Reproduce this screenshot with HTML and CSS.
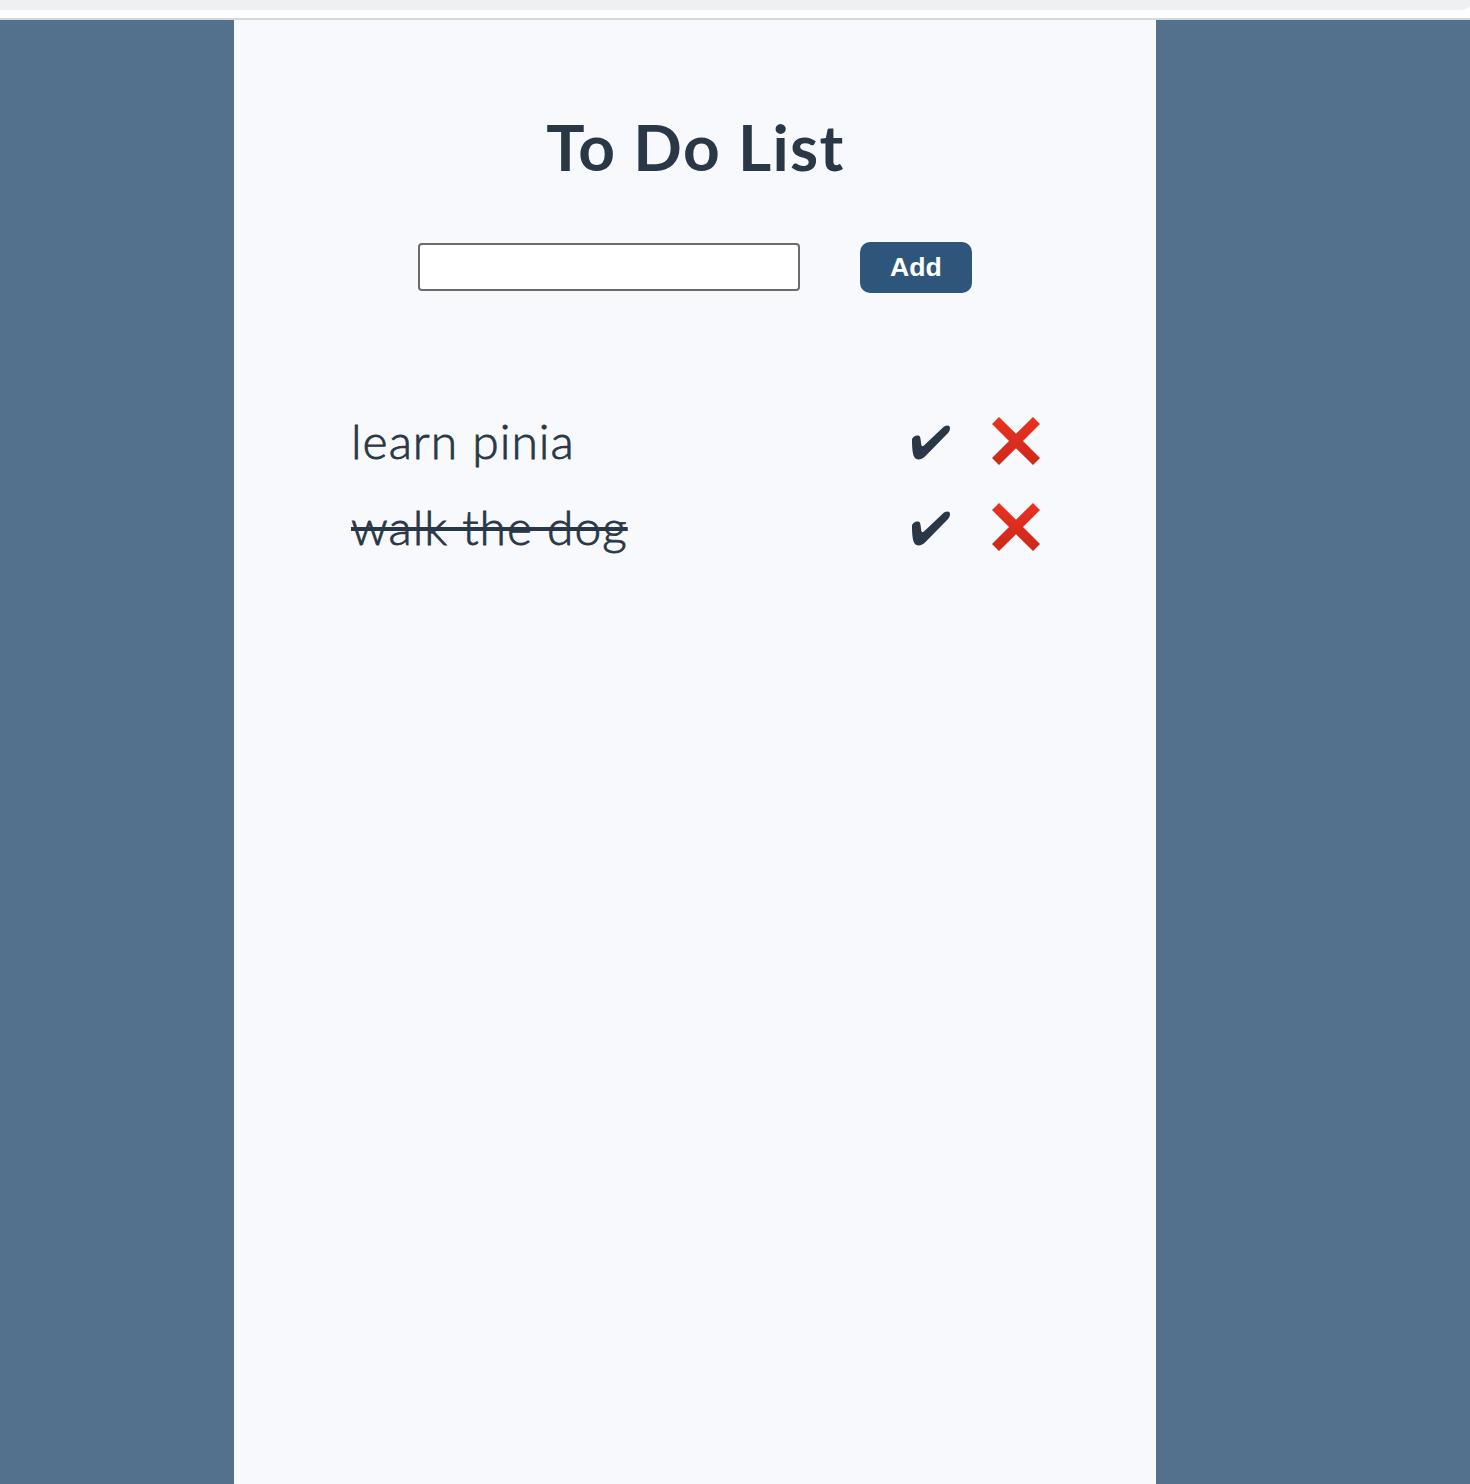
FILE: index.html
```html
<!DOCTYPE html>
<html lang="en">
<head>
  <meta charset="utf-8">
  <title>To Do List</title>
  <link rel="stylesheet" href="styles.css">
</head>
<body>
  <div class="toolbar"><div class="toolbar-field"></div></div>
  <main class="app">
    <h1 class="title">To Do List</h1>
    <form class="add-form">
      <input class="add-input" type="text" aria-label="New item">
      <button class="add-button" type="button">Add</button>
    </form>
    <ul class="todos">
      <li class="todo">
        <span class="todo-text todo-text-open">learn pinia</span>
        <svg class="check" viewBox="0 0 40 36" aria-label="Toggle"><path d="M1 15C1 12 5 10 8 10.700C10 11.500 9.500 17 10.600 20.500C11 21.800 12.500 21 14 19.500L33 1.400C36 -.2 39 0 39 3C39 5 38.300 6.600 36.800 8.200L14.500 31C11 34.500 6.500 36 3.600 32.500C1.200 29 1 20 1 15Z"/></svg>
        <svg class="cross" viewBox="0 0 48 48" aria-label="Delete"><path d="M7 0L24 16.700L41 0L48 7L31 24L48 41L41 48L24 31.300L7 48L0 41L17 24L0 7Z" fill="url(#red)"/></svg>
      </li>
      <li class="todo">
        <span class="todo-text todo-text-done">walk the dog</span>
        <svg class="check" viewBox="0 0 40 36" aria-label="Toggle"><path d="M1 15C1 12 5 10 8 10.700C10 11.500 9.500 17 10.600 20.500C11 21.800 12.500 21 14 19.500L33 1.400C36 -.2 39 0 39 3C39 5 38.300 6.600 36.800 8.200L14.500 31C11 34.500 6.500 36 3.600 32.500C1.200 29 1 20 1 15Z"/></svg>
        <svg class="cross" viewBox="0 0 48 48" aria-label="Delete"><defs><linearGradient id="red" x1="0" y1="0" x2="0" y2="1"><stop offset="0" stop-color="#ea3120"/><stop offset="1" stop-color="#cd281b"/></linearGradient></defs><path d="M7 0L24 16.700L41 0L48 7L31 24L48 41L41 48L24 31.300L7 48L0 41L17 24L0 7Z" fill="url(#red)"/></svg>
      </li>
    </ul>
  </main>
</body>
</html>
```
FILE: styles.css
```css
* {
  box-sizing: border-box;
}

body {
  margin: 0;
  min-height: 1484px;
  background: #53718d;
  color: #293746;
  font-family: Avenir, Lato, sans-serif;
}

.toolbar {
  height: 20px;
  background: #fff;
  border-bottom: 2px solid #d5d8da;
}

.toolbar-field {
  height: 10px;
  background: #eff0f2;
  border-bottom-right-radius: 12px 4px;
}

.app {
  width: 922px;
  height: 1464px;
  margin-left: 234px;
  padding-top: 87px;
  background: #f7f9fc;
}

.title {
  margin: 0;
  padding-left: 1px;
  font-size: 64px;
  line-height: 80px;
  font-weight: 700;
  letter-spacing: 1.35px;
  text-align: center;
  white-space: nowrap;
}

.add-form {
  display: flex;
  justify-content: center;
  align-items: flex-start;
  gap: 60px;
  height: 51px;
  margin-top: 55px;
}

.add-input {
  width: 382px;
  height: 48px;
  margin-top: 1px;
  padding: 0 8px;
  border: 2px solid #6b6b6b;
  border-radius: 4px;
  background: #fff;
  font: 27px "Liberation Sans", sans-serif;
}

.add-button {
  width: 112px;
  height: 51px;
  padding: 0;
  border: 0;
  border-radius: 10px;
  background: #2e567b;
  color: #fff;
  font: 700 26.67px "Liberation Sans", sans-serif;
}

.todos {
  margin: 105px 116px 0 117px;
  padding: 0;
  list-style: none;
}

.todo {
  display: flex;
  align-items: center;
  height: 86px;
}

.todo-text {
  font-size: 48px;
  font-weight: 300;
  line-height: 66px;
  letter-spacing: 1px;
  white-space: nowrap;
  -webkit-text-stroke: 0.8px #293746;
}

.todo-text-done {
  text-decoration: line-through;
  text-decoration-thickness: 3.5px;
}

.check {
  width: 40px;
  height: 36px;
  margin-top: 4px;
  margin-left: auto;
  fill: #293746;
}

.cross {
  width: 48px;
  height: 48px;
  margin-left: 41px;
}
```
